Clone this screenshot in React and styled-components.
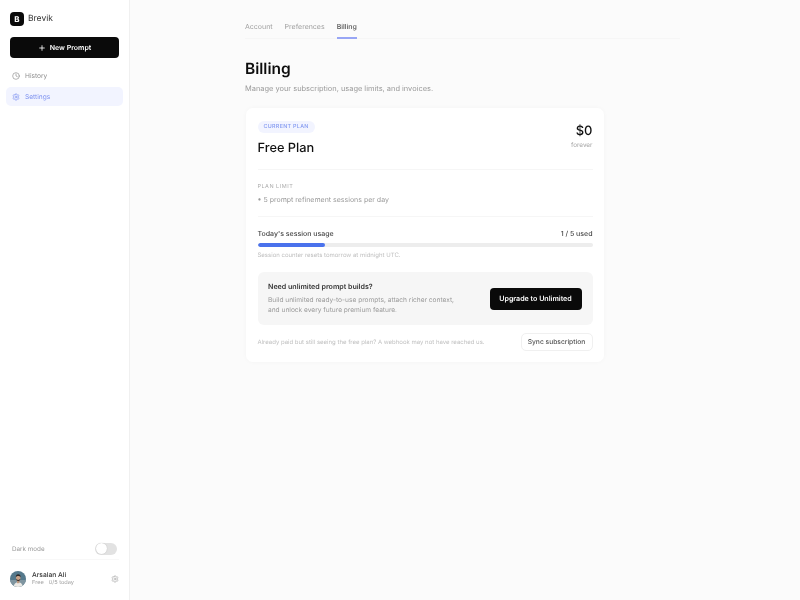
import React from "react";
import styled, { createGlobalStyle } from "styled-components";
import { Plus, Clock, Settings } from "lucide-react";

const Global = createGlobalStyle`
  html, body { margin: 0; padding: 0; height: 100%; }
  body {
    font-family: Inter, "Liberation Sans", sans-serif;
    background: #fbfbfb;
    color: #111;
    text-rendering: geometricPrecision;
    -webkit-font-smoothing: antialiased;
  }
  #root { height: 100%; }
  * { box-sizing: border-box; }
`;

const Shell = styled.div`
  display: flex;
  width: 800px;
  height: 600px;
  overflow: hidden;
  will-change: transform;
`;

const Sidebar = styled.aside`
  width: 130px;
  flex: none;
  display: flex;
  flex-direction: column;
  background: #fff;
  border-right: 1px solid #f0f0f0;
`;

const Brand = styled.div`
  display: flex;
  gap: 4px;
  padding: 12px 10px 0;
  height: 37px;
  align-items: flex-start;
  font-size: 8.5px;
  line-height: 14px;
  color: #333;
`;

const BrandMark = styled.div`
  width: 14px;
  height: 14px;
  border-radius: 4px;
  background: #0a0a0a;
  color: #fff;
  font-size: 8px;
  font-weight: 700;
  display: flex;
  align-items: center;
  justify-content: center;
`;

const NewPrompt = styled.button`
  all: unset;
  box-sizing: border-box;
  margin: 0 10px;
  height: 21px;
  width: 109px;
  flex: none;
  border-radius: 4px;
  background: #0a0a0a;
  color: #fff;
  font-size: 7px;
  font-weight: 600;
  display: flex;
  align-items: center;
  justify-content: center;
  gap: 4px;
`;

const Nav = styled.nav`
  display: flex;
  flex-direction: column;
  gap: 2px;
  padding: 8px 6px 0;
`;

const NavItem = styled.div`
  height: 19px;
  border-radius: 5px;
  padding: 0 6px;
  display: flex;
  align-items: center;
  gap: 5px;
  font-size: 6.6px;
  color: ${p => (p.$active ? "#7f93f0" : "#8f8f8f")};
  background: ${p => (p.$active ? "#f2f4ff" : "transparent")};
`;

const SideFoot = styled.div`
  margin-top: auto;
  padding: 0 10px;
`;

const DarkRow = styled.div`
  display: flex;
  align-items: center;
  justify-content: space-between;
  height: 22px;
  padding: 0 2px;
  font-size: 6.3px;
  color: #9a9a9a;
  border-bottom: 1px solid #f8f8f8;
`;

const Toggle = styled.div`
  width: 22px;
  height: 12px;
  border-radius: 6px;
  background: #e2e2e2;
  padding: 0.5px;
`;

const ToggleKnob = styled.div`
  width: 11px;
  height: 11px;
  border-radius: 50%;
  background: #fff;
  box-shadow: 0 0 1px rgba(0, 0, 0, 0.25);
`;

const UserRow = styled.div`
  display: flex;
  align-items: center;
  height: 40px;
  padding-bottom: 2px;
  gap: 6px;
`;

const UserText = styled.div`
  flex: 1;
  display: flex;
  flex-direction: column;
  gap: 1px;
`;

const UserName = styled.div`
  font-size: 6.7px;
  line-height: 8px;
  font-weight: 500;
  color: #333;
`;

const UserMeta = styled.div`
  font-size: 5.6px;
  line-height: 7px;
  color: #a0a0a0;
  display: flex;
  gap: 5px;
`;

const Main = styled.main`
  flex: 1;
  padding: 0 120px 0 115px;
`;

const Tabs = styled.div`
  display: flex;
  gap: 12px;
  height: 39px;
  align-items: flex-end;
  border-bottom: 1px solid #f6f6f6;
`;

const Tab = styled.div`
  height: 17px;
  margin-bottom: -1px;
  font-size: 7px;
  line-height: 9px;
  color: ${p => (p.$active ? "#555" : "#a0a0a0")};
  font-weight: ${p => (p.$active ? 500 : 400)};
  border-bottom: 2px solid ${p => (p.$active ? "#98a6f5" : "transparent")};
`;

const Title = styled.h1`
  margin: 20px 0 0;
  font-size: 15.5px;
  line-height: 19px;
  font-weight: 600;
  color: #0d0d0d;
`;

const Subtitle = styled.p`
  margin: 5px 0 0;
  font-size: 7.45px;
  line-height: 12px;
  color: #9a9a9a;
`;

const Card = styled.section`
  margin: 13px 0 0 1px;
  width: 358px;
  height: 254px;
  background: #fff;
  border-radius: 7px;
  box-shadow: 0 0 5px rgba(0, 0, 0, 0.03);
  padding: 13px 11.5px 0;
  display: flex;
  flex-direction: column;
`;

const PlanHead = styled.div`
  display: flex;
  justify-content: space-between;
  height: 49px;
  border-bottom: 1px solid #f6f6f6;
`;

const Badge = styled.div`
  width: fit-content;
  height: 12px;
  line-height: 12px;
  padding: 0 6px;
  border-radius: 6px;
  background: #f2f4ff;
  color: #8097f0;
  font-size: 5.4px;
  font-weight: 500;
  letter-spacing: 0.3px;
`;

const PlanName = styled.div`
  margin-top: 7px;
  font-size: 12.8px;
  line-height: 18px;
  font-weight: 500;
  color: #111;
`;

const Price = styled.div`
  margin-top: 1px;
  text-align: right;
  font-size: 13px;
  line-height: 18px;
  font-weight: 500;
  color: #111;
`;

const Forever = styled.div`
  text-align: right;
  font-size: 6.4px;
  line-height: 8px;
  margin-top: 1px;
  color: #a5a5a5;
`;

const LimitBlock = styled.div`
  height: 47px;
  padding-top: 14px;
  border-bottom: 1px solid #f6f6f6;
`;

const LimitLabel = styled.div`
  font-size: 5.5px;
  letter-spacing: 0.5px;
  color: #acacac;
`;

const LimitItem = styled.div`
  margin-top: 5px;
  font-size: 7px;
  color: #9a9a9a;
`;

const UsageRow = styled.div`
  display: flex;
  justify-content: space-between;
  margin-top: 12px;
  font-size: 7px;
  line-height: 10px;
  font-weight: 500;
  color: #444;
`;

const Track = styled.div`
  margin-top: 4px;
  height: 4px;
  border-radius: 2px;
  background: #ededed;
  overflow: hidden;
`;

const Fill = styled.div`
  height: 100%;
  border-radius: 2px;
  background: #4a72ec;
`;

const ResetNote = styled.div`
  margin-top: 4px;
  font-size: 6px;
  line-height: 10px;
  color: #c0c0c0;
`;

const Upsell = styled.div`
  margin-top: 11px;
  height: 53px;
  border-radius: 6px;
  background: #f6f6f6;
  padding: 0 11px 0 10.5px;
  display: flex;
  align-items: center;
  justify-content: space-between;
`;

const UpsellTitle = styled.div`
  font-size: 7.1px;
  line-height: 10px;
  font-weight: 600;
  color: #333;
`;

const UpsellText = styled.div`
  margin-top: 2.5px;
  font-size: 6.6px;
  line-height: 10px;
  color: #9a9a9a;
`;

const Upgrade = styled.button`
  all: unset;
  box-sizing: border-box;
  width: 92px;
  height: 22px;
  border-radius: 4px;
  background: #0a0a0a;
  color: #fff;
  font-size: 7.1px;
  font-weight: 600;
  text-align: center;
  line-height: 22px;
`;

const SyncRow = styled.div`
  margin-top: 8px;
  display: flex;
  align-items: center;
  justify-content: space-between;
  font-size: 6px;
  color: #c0c0c0;
`;

const Sync = styled.button`
  all: unset;
  box-sizing: border-box;
  width: 72px;
  height: 18px;
  border: 1px solid #f0f0f0;
  border-radius: 5px;
  background: #fff;
  color: #555;
  font-size: 6.7px;
  font-weight: 500;
  text-align: center;
  line-height: 16px;
`;

const Avatar = () => (
  <svg width="16" height="16" viewBox="0 0 16 16" style={{ flex: "none" }}>
    <defs>
      <clipPath id="av">
        <circle cx="8" cy="8" r="8" />
      </clipPath>
    </defs>
    <g clipPath="url(#av)">
      <rect width="16" height="16" fill="#55798c" />
      <rect x="0" y="9" width="16" height="7" fill="#7f95a0" />
      <path d="M3.5 16c.3-3.200 2.200-4.800 4.700-4.800s4.400 1.600 4.700 4.800z" fill="#eceae6" />
      <rect x="7" y="9" width="2.400" height="3.200" fill="#bd987f" />
      <ellipse cx="8.200" cy="6.800" rx="2.300" ry="2.900" fill="#c6a28a" />
      <path d="M5.800 6.400C5.600 4 6.800 3.200 8.200 3.200s2.700.8 2.400 3.200c-.6-1.100-1.400-1.400-2.400-1.400s-1.800.3-2.400 1.400z" fill="#2f2a28" />
      <path d="M6.100 7.600c.4 1.800 3.800 1.800 4.200 0l-.3 1.700-1.800.9-1.800-.9z" fill="#3a302b" />
    </g>
  </svg>
);

export default function App() {
  return (
    <Shell>
      <Global />
      <Sidebar>
        <Brand>
          <BrandMark>B</BrandMark>
          Brevik
        </Brand>
        <NewPrompt>
          <Plus size={8} strokeWidth={2.5} />
          New Prompt
        </NewPrompt>
        <Nav>
          <NavItem>
            <Clock size={8} />
            History
          </NavItem>
          <NavItem $active>
            <Settings size={8} />
            Settings
          </NavItem>
        </Nav>
        <SideFoot>
          <DarkRow>
            Dark mode
            <Toggle>
              <ToggleKnob />
            </Toggle>
          </DarkRow>
          <UserRow>
            <Avatar />
            <UserText>
              <UserName>Arsalan Ali</UserName>
              <UserMeta>
                <span>Free</span>
                <span>0/5 today</span>
              </UserMeta>
            </UserText>
            <Settings size={8} color="#a8a8a8" />
          </UserRow>
        </SideFoot>
      </Sidebar>
      <Main>
        <Tabs>
          <Tab>Account</Tab>
          <Tab>Preferences</Tab>
          <Tab $active>Billing</Tab>
        </Tabs>
        <Title>Billing</Title>
        <Subtitle>Manage your subscription, usage limits, and invoices.</Subtitle>
        <Card>
          <PlanHead>
            <div>
              <Badge>CURRENT PLAN</Badge>
              <PlanName>Free Plan</PlanName>
            </div>
            <div>
              <Price>$0</Price>
              <Forever>forever</Forever>
            </div>
          </PlanHead>
          <LimitBlock>
            <LimitLabel>PLAN LIMIT</LimitLabel>
            <LimitItem>• 5 prompt refinement sessions per day</LimitItem>
          </LimitBlock>
          <UsageRow>
            <span>Today's session usage</span>
            <span>1 / 5 used</span>
          </UsageRow>
          <Track>
            <Fill style={{ width: `${(1 / 5) * 100}%` }} />
          </Track>
          <ResetNote>Session counter resets tomorrow at midnight UTC.</ResetNote>
          <Upsell>
            <div>
              <UpsellTitle>Need unlimited prompt builds?</UpsellTitle>
              <UpsellText>
                Build unlimited ready-to-use prompts, attach richer context,
                <br />
                and unlock every future premium feature.
              </UpsellText>
            </div>
            <Upgrade>Upgrade to Unlimited</Upgrade>
          </Upsell>
          <SyncRow>
            <span>Already paid but still seeing the free plan? A webhook may not have reached us.</span>
            <Sync>Sync subscription</Sync>
          </SyncRow>
        </Card>
      </Main>
    </Shell>
  );
}
